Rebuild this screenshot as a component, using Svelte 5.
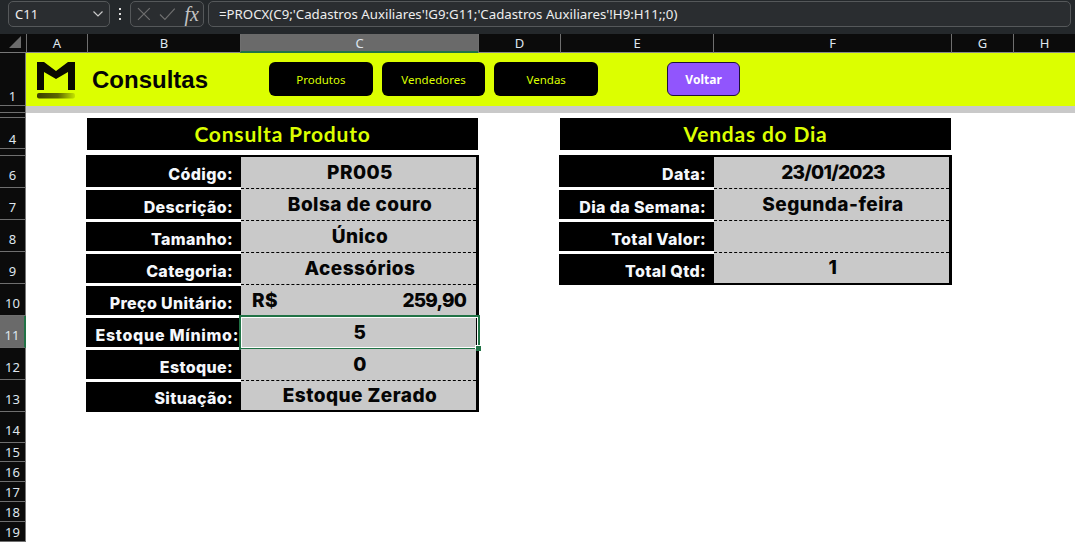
<script>
  const columns = [
    { name: 'A', w: 61 },
    { name: 'B', w: 153 },
    { name: 'C', w: 238, active: true },
    { name: 'D', w: 82 },
    { name: 'E', w: 153 },
    { name: 'F', w: 238 },
    { name: 'G', w: 62 },
    { name: 'H', w: 62 }
  ];

  const rows = [
    { n: 1, h: 53 }, { n: 2, h: 7 }, { n: 3, h: 5 }, { n: 4, h: 31 }, { n: 5, h: 7 },
    { n: 6, h: 32 }, { n: 7, h: 32 }, { n: 8, h: 32 }, { n: 9, h: 32 }, { n: 10, h: 32 },
    { n: 11, h: 32, active: true }, { n: 12, h: 32 }, { n: 13, h: 32 }, { n: 14, h: 31 },
    { n: 15, h: 19 }, { n: 16, h: 20 }, { n: 17, h: 20 }, { n: 18, h: 20 }, { n: 19, h: 20 }
  ];

  const gridColumns = '26px ' + columns.map((c) => c.w + 'px').join(' ');
  const gridRows = '19px ' + rows.map((r) => r.h + 'px').join(' ');

  const produto = [
    { label: 'Código:', value: 'PR005' },
    { label: 'Descrição:', value: 'Bolsa de couro' },
    { label: 'Tamanho:', value: 'Único' },
    { label: 'Categoria:', value: 'Acessórios' },
    { label: 'Preço Unitário:', money: ['R$', '259,90'], plain: true },
    { label: 'Estoque Mínimo:', value: '5', selected: true, plain: true, tight: true },
    { label: 'Estoque:', value: '0' },
    { label: 'Situação:', value: 'Estoque Zerado' }
  ];

  const vendas = [
    { label: 'Data:', value: '23/01/2023', num: true },
    { label: 'Dia da Semana:', value: 'Segunda-feira' },
    { label: 'Total Valor:', value: '' },
    { label: 'Total Qtd:', value: '1' }
  ];
</script>

{#snippet dataTable(items, cls)}
  <div class="table {cls}">
    {#each items as item}
      <div class="row">
        <div class="label" class:tight={item.tight}>{item.label}</div>
        <div class="value" class:plain={item.plain} class:num={item.num}>
          {#if item.money}
            <span>{item.money[0]}</span><span class="price">{item.money[1]}</span>
          {:else}
            {item.value}
          {/if}
          {#if item.selected}
            <div class="selection"><i></i></div>
          {/if}
        </div>
      </div>
    {/each}
  </div>
{/snippet}

<div class="window">
  <div class="formula-bar">
    <div class="name-box">
      <span>C11</span>
      <svg width="12" height="8" viewBox="0 0 12 8"><path d="M1.5 1.5 L6 6 L10.5 1.5" fill="none" stroke="#c9c9c9" stroke-width="1.2" /></svg>
    </div>
    <div class="grip"><b></b><b></b><b></b></div>
    <div class="fx-box">
      <svg width="14" height="14" viewBox="0 0 14 14"><path d="M1 1 L13 13 M13 1 L1 13" stroke="#6f6f6f" stroke-width="1.2" /></svg>
      <svg width="17" height="14" viewBox="0 0 17 14"><path d="M1 7.5 L6 12.5 L16 1.5" fill="none" stroke="#6f6f6f" stroke-width="1.2" /></svg>
      <span class="fx">fx</span>
    </div>
    <div class="formula">=PROCX(C9;'Cadastros Auxiliares'!G9:G11;'Cadastros Auxiliares'!H9:H11;;0)</div>
  </div>

  <div class="sheet" style="grid-template-columns: {gridColumns}; grid-template-rows: {gridRows}">
    <div class="corner"><svg width="14" height="14" viewBox="0 0 14 14"><path d="M12 1 V13 H0 Z" fill="#6b6b6b" /></svg></div>
    {#each columns as col, i}
      <div class="col-head" class:active={col.active} style="grid-column: {i + 2}">{col.name}</div>
    {/each}
    {#each rows as row, i}
      <div class="row-head" class:active={row.active} class:tall={row.n >= 6 && row.n <= 14} style="grid-row: {i + 2}">
        {row.h < 10 ? '' : row.n}
      </div>
    {/each}

    <div class="banner">
      <svg class="logo" width="40" height="40" viewBox="0 0 40 40">
        <defs>
          <linearGradient id="brush" x1="0" x2="1" y1="0" y2="0">
            <stop offset="0" stop-color="#3a3f00" />
            <stop offset="0.55" stop-color="#5c6600" />
            <stop offset="1" stop-color="#c4e400" />
          </linearGradient>
        </defs>
        <path d="M1 1 H8 L20 10 L32 1 H39 V29 H32 V11 L20 18 L8 11 V29 H1 Z" fill="#0a0a00" />
        <rect x="1" y="32" width="38" height="5.5" rx="2" fill="url(#brush)" />
      </svg>
      <div class="brand">Consultas</div>
      <div class="buttons">
        <button>Produtos</button>
        <button>Vendedores</button>
        <button>Vendas</button>
      </div>
      <button class="back">Voltar</button>
    </div>

    <div class="band"></div>

    <div class="title left-title">Consulta Produto</div>
    <div class="title right-title">Vendas do Dia</div>

    {@render dataTable(produto, 'left-table')}
    {@render dataTable(vendas, 'right-table')}
  </div>
</div>

<style>
  :global(body) {
    margin: 0;
    background: #fff;
    overflow: hidden;
  }

  .window {
    width: 1075px;
    height: 543px;
    overflow: hidden;
    font-family: "Noto Sans", sans-serif;
  }

  .formula-bar {
    height: 34px;
    box-sizing: border-box;
    background: #24282b;
    padding: 1px 4px 7px 8px;
    display: flex;
    align-items: stretch;
    color: #eee;
    font-size: 13px;
  }

  .name-box {
    width: 102px;
    box-sizing: border-box;
    border: 1px solid #55585a;
    border-radius: 5px;
    background: #2a2d30;
    display: flex;
    align-items: center;
    justify-content: space-between;
    padding: 0 5px 0 6px;
  }

  .grip {
    width: 20px;
    display: flex;
    flex-direction: column;
    align-items: center;
    justify-content: center;
    gap: 3px;
  }

  .grip b {
    width: 2px;
    height: 2px;
    background: #ddd;
  }

  .fx-box {
    width: 74px;
    box-sizing: border-box;
    border: 1px solid #55585a;
    border-radius: 5px;
    background: #2a2d30;
    display: flex;
    align-items: center;
    gap: 8px;
    padding: 0 4px 0 6px;
  }

  .fx {
    font-family: "Liberation Serif", serif;
    font-style: italic;
    font-size: 20px;
    line-height: 20px;
    color: #c4c4c4;
    margin-left: 1px;
  }

  .formula {
    flex: 1;
    margin-left: 4px;
    border: 1px solid #55585a;
    border-radius: 5px;
    background: #2a2d30;
    padding-left: 10px;
    display: flex;
    align-items: center;
    font-size: 13.25px;
  }

  .sheet {
    display: grid;
    height: 509px;
    background: #fff;
  }

  .corner {
    grid-column: 1;
    grid-row: 1;
    background: #0b0b0b;
    display: flex;
    align-items: flex-end;
    justify-content: flex-end;
    padding: 0 3px 3px 0;
    box-sizing: border-box;
    border-bottom: 1px solid #777;
  }

  .col-head {
    grid-row: 1;
    background: #0b0b0b;
    color: #dfe6ee;
    font-size: 13px;
    display: flex;
    align-items: center;
    justify-content: center;
    box-sizing: border-box;
    border-left: 1px solid #6f6f6f;
    border-bottom: 1px solid #8a8a8a;
  }

  .col-head.active {
    background: #6a6a6a;
    border-bottom: 2px solid #217346;
  }

  .row-head {
    grid-column: 1;
    background: #0b0b0b;
    color: #dfe6ee;
    font-size: 13px;
    box-sizing: border-box;
    border-bottom: 1px solid #6f6f6f;
    border-right: 1px solid #777;
    display: flex;
    align-items: flex-end;
    justify-content: center;
    line-height: 18px;
    overflow: hidden;
  }

  .row-head.tall {
    padding-bottom: 3px;
  }

  .row-head.active {
    background: #6a6a6a;
    border-right: 2px solid #217346;
  }

  .banner {
    grid-column: 2 / -1;
    grid-row: 2;
    background: #dcff00;
    display: flex;
    align-items: center;
    padding-left: 10px;
  }

  .logo {
    flex: none;
    margin-top: 2px;
  }

  .brand {
    font-family: "Liberation Sans", sans-serif;
    font-weight: 700;
    font-size: 24px;
    color: #050505;
    margin-left: 16px;
    width: 177px;
    padding-top: 1px;
  }

  .buttons {
    display: flex;
    gap: 9px;
  }

  button {
    width: 103.7px;
    height: 34px;
    margin-top: -1px;
    border: 0;
    border-radius: 6px;
    background: #000;
    color: #dcff00;
    font-family: "Noto Sans", sans-serif;
    font-size: 11.5px;
    padding: 0;
  }

  .back {
    width: 73px;
    margin-left: 69px;
    background: #9155fd;
    border: 1px solid #1d1236;
    color: #fff;
    font-weight: 700;
    font-size: 12px;
  }

  .band {
    grid-column: 2 / -1;
    grid-row: 3;
    background: #c9c9c9;
  }

  .title {
    grid-row: 5 / 6;
    background: #000;
    color: #dcff00;
    font-family: Lato, sans-serif;
    font-weight: 700;
    font-size: 21px;
    letter-spacing: 0.8px;
    display: flex;
    align-items: center;
    justify-content: center;
    box-sizing: border-box;
    height: 32px;
    padding-bottom: 2px;
  }

  .left-title {
    grid-column: 3 / 5;
  }

  .right-title {
    grid-column: 6 / 8;
  }

  .table {
    grid-row: 7 / 15;
    box-sizing: border-box;
    margin: -1px -1px 0 -1px;
    border-top: 2px solid #000;
    border-right: 3px solid #000;
    border-bottom: 2px solid #000;
    display: flex;
    flex-direction: column;
    font-family: Inter, sans-serif;
    font-weight: 800;
    font-size: 16px;
  }

  .left-table {
    grid-column: 3 / 5;
  }

  .right-table {
    grid-column: 6 / 8;
    grid-row: 7 / 11;
    margin-bottom: -1px;
  }

  .row {
    display: flex;
    height: 32px;
    flex: none;
  }

  .row:last-child {
    height: auto;
    flex: 1;
  }

  .label {
    width: 155px;
    flex: none;
    box-sizing: border-box;
    background: #000;
    color: #f4f7fb;
    border-top: 1px solid #fff;
    border-bottom: 2px solid #fff;
    display: flex;
    align-items: center;
    justify-content: flex-end;
    padding: 4px 8px 0 0;
    white-space: nowrap;
    letter-spacing: 0.35px;
  }

  .label.tight {
    padding-right: 2px;
    letter-spacing: 0.7px;
  }

  .row:first-child .label {
    border-top: 0;
  }

  .row:last-child .label {
    border-bottom: 0;
  }

  .value {
    flex: 1;
    position: relative;
    background: #c9c9c9;
    color: #050505;
    border-bottom: 1px dashed #000;
    box-sizing: border-box;
    display: flex;
    align-items: center;
    justify-content: center;
    font-size: 19px;
    letter-spacing: 0.45px;
    padding: 0 0 1px 3px;
  }

  .value.plain {
    border-bottom: 0;
    padding-bottom: 2px;
  }

  .value.num {
    letter-spacing: -0.75px;
  }

  .value:has(span) {
    justify-content: space-between;
    padding: 0 10px 4px 11px;
  }

  .price {
    letter-spacing: -0.85px;
  }

  .row:last-child .value {
    border-bottom: 0;
  }

  .selection {
    position: absolute;
    top: -2px;
    left: -2px;
    right: -4px;
    bottom: -1px;
    border: 2px solid #217346;
    box-shadow: inset 0 0 0 1px #fff;
  }

  .selection i {
    position: absolute;
    right: -3px;
    bottom: -3px;
    width: 5px;
    height: 5px;
    background: #217346;
    border: 1px solid #fff;
    border-width: 1px 0 0 1px;
  }
</style>
